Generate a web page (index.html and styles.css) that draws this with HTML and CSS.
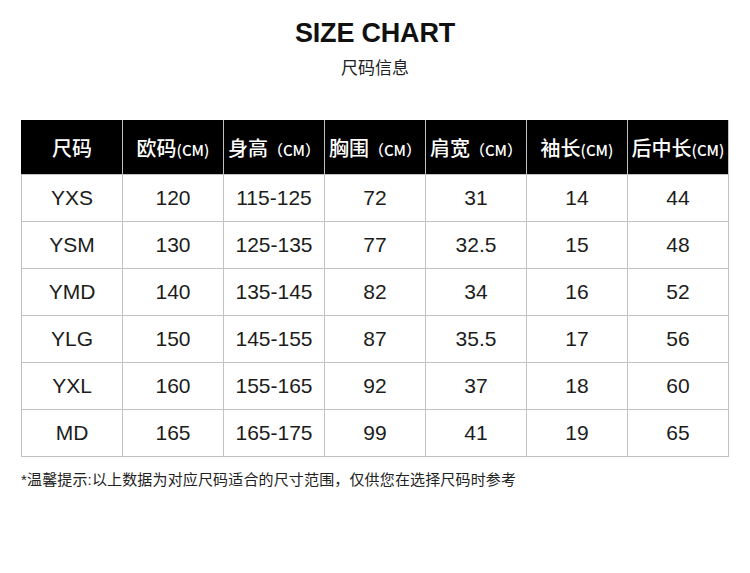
FILE: index.html
```html
<!DOCTYPE html>
<html lang="zh">
<head>
<meta charset="utf-8">
<link rel="stylesheet" href="styles.css">
</head>
<body>
<div class="page">
  <h1 class="title">SIZE CHART</h1>
  <div class="subtitle">尺码信息</div>
  <table class="chart">
    <thead>
      <tr>
        <th>尺码</th>
        <th>欧码<span class="unit">(CM)</span></th>
        <th>身高<span class="unit">（CM）</span></th>
        <th>胸围<span class="unit">（CM）</span></th>
        <th>肩宽<span class="unit">（CM）</span></th>
        <th>袖长<span class="unit">(CM)</span></th>
        <th>后中长<span class="unit">(CM)</span></th>
      </tr>
    </thead>
    <tbody>
      <tr><td>YXS</td><td>120</td><td>115-125</td><td>72</td><td>31</td><td>14</td><td>44</td></tr>
      <tr><td>YSM</td><td>130</td><td>125-135</td><td>77</td><td>32.5</td><td>15</td><td>48</td></tr>
      <tr><td>YMD</td><td>140</td><td>135-145</td><td>82</td><td>34</td><td>16</td><td>52</td></tr>
      <tr><td>YLG</td><td>150</td><td>145-155</td><td>87</td><td>35.5</td><td>17</td><td>56</td></tr>
      <tr><td>YXL</td><td>160</td><td>155-165</td><td>92</td><td>37</td><td>18</td><td>60</td></tr>
      <tr><td>MD</td><td>165</td><td>165-175</td><td>99</td><td>41</td><td>19</td><td>65</td></tr>
    </tbody>
  </table>
  <p class="note">*温馨提示:以上数据为对应尺码适合的尺寸范围，仅供您在选择尺码时参考</p>
</div>
</body>
</html>
```

FILE: styles.css
```css
html, body {
  margin: 0;
  padding: 0;
  background: #ffffff;
}

.page {
  width: 750px;
  height: 573px;
  display: flex;
  flex-direction: column;
  align-items: center;
  font-family: "Liberation Sans", "Noto Sans CJK SC", sans-serif;
  color: #1a1a1a;
}

.title {
  margin: 17px 0 0;
  font-size: 27px;
  line-height: 32px;
  font-weight: 700;
  color: #111;
  letter-spacing: -0.2px;
}

.subtitle {
  margin-top: 6px;
  font-family: "Noto Sans CJK SC", sans-serif;
  font-size: 17px;
  line-height: 24px;
  color: #222;
}

.chart {
  margin-top: 41px;
  width: 708px;
  border-collapse: collapse;
  table-layout: fixed;
}

.chart th,
.chart td {
  border: 1.5px solid #c2c2c2;
  text-align: center;
  padding: 0;
  white-space: nowrap;
}

.chart th {
  background: #000;
  color: #fff;
  height: 53px;
  font-family: "Noto Sans CJK SC", sans-serif;
  font-weight: 500;
  font-size: 20px;
  letter-spacing: 0;
}

.chart thead th {
  border-top-color: #000;
}

.chart th:first-child {
  border-left-color: #000;
}

.unit {
  font-size: 15px;
  font-weight: 500;
}

.chart td {
  height: 46px;
  font-size: 21px;
  color: #1c1c1c;
}

.note {
  align-self: flex-start;
  margin: 13px 0 0 21px;
  font-family: "Liberation Sans", "Noto Sans CJK SC", sans-serif;
  font-size: 15px;
  line-height: 20px;
  letter-spacing: 0.15px;
  color: #222;
}
```
